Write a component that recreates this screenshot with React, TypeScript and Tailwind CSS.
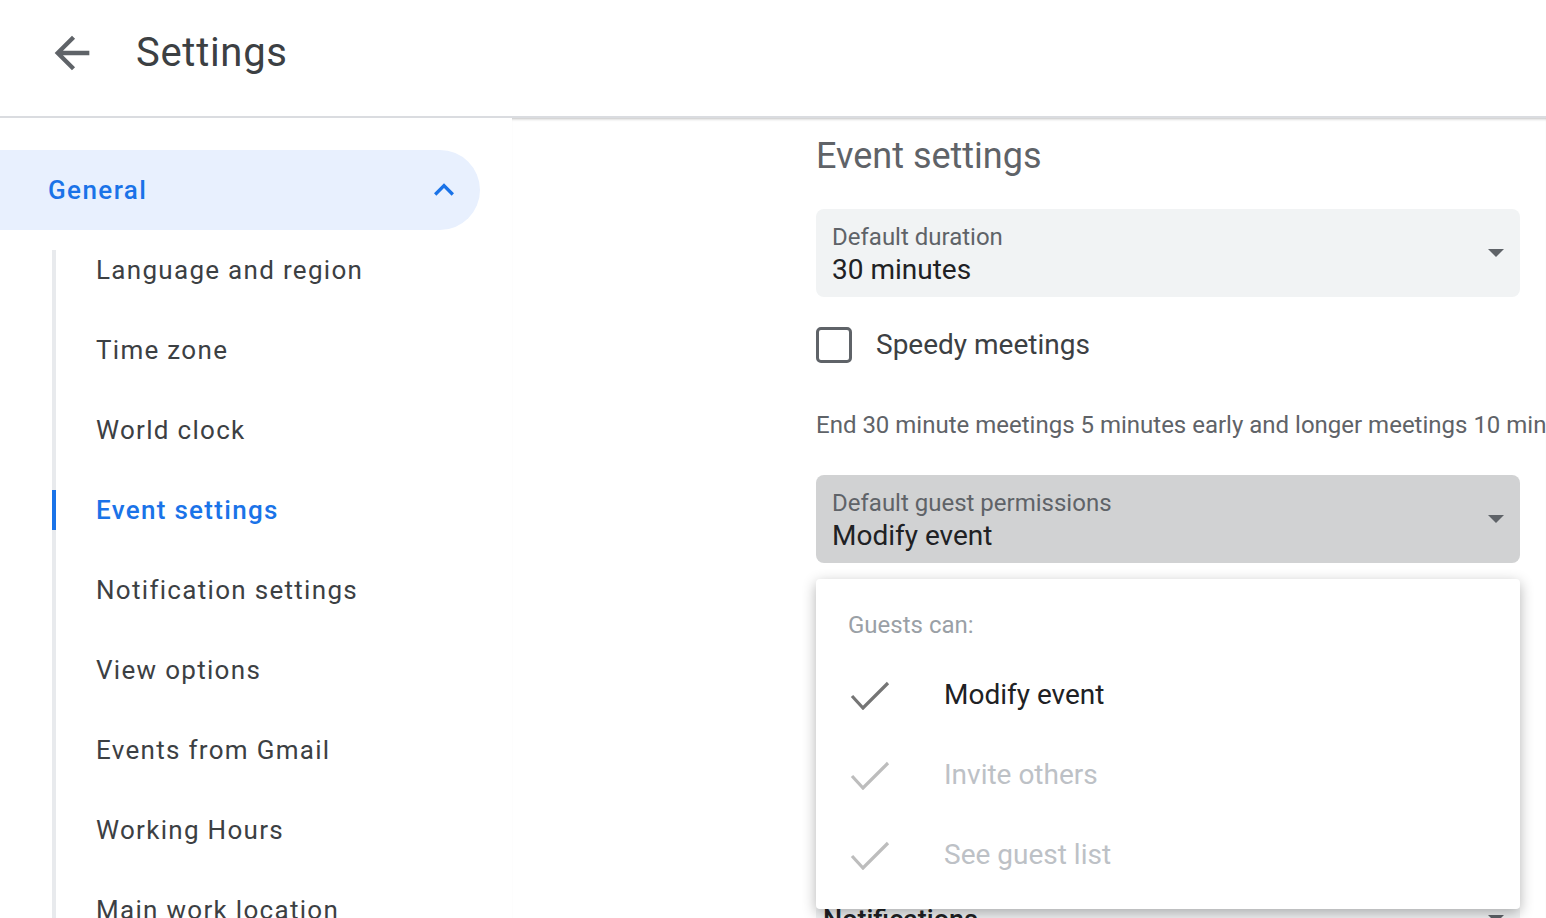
const navItems = [
  "Language and region",
  "Time zone",
  "World clock",
  "Event settings",
  "Notification settings",
  "View options",
  "Events from Gmail",
  "Working Hours",
  "Main work location",
];

function ArrowBack() {
  return (
    <svg viewBox="0 0 24 24" className="h-[52px] w-[52px]" fill="#5f6368">
      <path d="M20 11H7.83l5.59-5.59L12 4l-8 8 8 8 1.41-1.41L7.83 13H20v-2z" />
    </svg>
  );
}

function Caret() {
  return (
    <svg viewBox="0 0 16 8" className="h-[8px] w-[16px]" fill="#5f6368">
      <path d="M0 0h16L8 8z" />
    </svg>
  );
}

function Check({ color }: { color: string }) {
  return (
    <svg viewBox="0 0 40 30" className="h-[30px] w-[40px]" fill="none">
      <polyline points="2,16 13,28 38,3" stroke={color} strokeWidth="3.2" />
    </svg>
  );
}

type SelectProps = {
  label: string;
  value: string;
  pressed?: boolean;
};

function SelectField({ label, value, pressed }: SelectProps) {
  return (
    <div
      className={`flex h-[88px] w-[704px] items-center justify-between rounded-[8px] pr-4 pl-4 ${
        pressed ? "bg-[#d1d2d3]" : "bg-[#f1f3f4]"
      }`}
    >
      <div className="flex flex-col self-start pt-[14px]">
        <span className="text-[24px] leading-[28px] text-[#5f6368]">{label}</span>
        <span className="text-[28px] leading-[38px] text-[#202124]">{value}</span>
      </div>
      <Caret />
    </div>
  );
}

export default function App() {
  return (
    <div className="h-[918px] w-[1546px] overflow-hidden bg-white font-['Roboto',sans-serif]">
      <header className="flex h-[118px] items-center border-b-2 border-[#dadce0] pb-[10px] pl-[46px]">
        <ArrowBack />
        <h1 className="ml-[38px] text-[40px] leading-[48px] tracking-[0.7px] text-[#3c4043]">Settings</h1>
      </header>

      <div className="flex">
        <nav className="w-[512px] shrink-0 pt-[32px]">
          <div className="flex h-[80px] w-[480px] items-center justify-between rounded-r-full bg-[#e8f0fe] pr-[16px] pl-[48px]">
            <span className="text-[26px] font-medium tracking-[1.4px] text-[#1a73e8]">General</span>
            <svg viewBox="0 0 24 24" className="h-[40px] w-[40px]" fill="#1a73e8">
              <path d="M12 8l-6 6 1.41 1.41L12 10.83l4.59 4.58L18 14z" />
            </svg>
          </div>
          <ul className="mt-[20px] ml-[52px] flex flex-col gap-[40px] border-l-4 border-[#e8eaed]">
            {navItems.map((item) => {
              const active = item === "Event settings";
              return (
                <li key={item} className="relative flex h-[40px] items-center pl-[40px]">
                  {active && <span className="absolute top-0 -left-[4px] h-[40px] w-[4px] bg-[#1a73e8]" />}
                  <span
                    className={`text-[26px] tracking-[1.3px] whitespace-nowrap ${
                      active ? "font-medium text-[#1a73e8]" : "text-[#3c4043]"
                    }`}
                  >
                    {item}
                  </span>
                </li>
              );
            })}
          </ul>
        </nav>

        <main className="relative min-w-0 flex-1 pt-[16px] pl-[304px] shadow-[inset_0_3px_3px_-2px_rgba(0,0,0,0.25)]">
          <h2 className="text-[36px] leading-[44px] text-[#5f6368]">Event settings</h2>

          <div className="mt-[31px]">
            <SelectField label="Default duration" value="30 minutes" />
          </div>

          <label className="mt-[30px] flex h-[36px] items-center gap-[24px]">
            <span className="h-[36px] w-[36px] rounded-[5px] border-[3px] border-[#5f6368]" />
            <span className="text-[28px] text-[#3c4043]">Speedy meetings</span>
          </label>

          <p className="mt-[48px] text-[24px] leading-[28px] whitespace-nowrap text-[#5f6368]">
            End 30 minute meetings 5 minutes early and longer meetings 10 minutes early
          </p>

          <div className="mt-[36px]">
            <SelectField label="Default guest permissions" value="Modify event" pressed />
          </div>

          <div className="mt-[340px] flex h-[88px] w-[704px] items-start justify-between rounded-[8px] bg-[#f1f3f4] pr-4 pl-[7px]">
            <span className="text-[27px] leading-[34px] font-medium text-[#202124]">Notifications</span>
            <div className="pt-[12px]">
              <Caret />
            </div>
          </div>

          <div className="absolute top-[461px] left-[304px] w-[704px] rounded-[4px] bg-white pt-[28px] pb-[14px] shadow-[0_4px_14px_rgba(0,0,0,0.3)]">
            <div className="pl-[32px] text-[24px] leading-[36px] text-[#9aa0a6]">Guests can:</div>
            <ul className="mt-[12px] flex flex-col">
              {[
                { text: "Modify event", on: true },
                { text: "Invite others", on: false },
                { text: "See guest list", on: false },
              ].map((o) => (
                <li key={o.text} className="flex h-[80px] items-center pl-[34px]">
                  <Check color={o.on ? "#757575" : "#bdbdbd"} />
                  <span
                    className={`ml-[54px] text-[28px] ${o.on ? "text-[#202124]" : "text-[#bdc1c6]"}`}
                  >
                    {o.text}
                  </span>
                </li>
              ))}
            </ul>
          </div>
        </main>
      </div>
    </div>
  );
}
